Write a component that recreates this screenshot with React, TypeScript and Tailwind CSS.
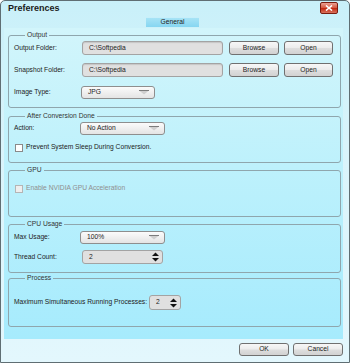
import React from "react";

function Btn({ label, className }: { label: string; className: string }) {
  return (
    <div
      className={`h-[14px] flex items-center justify-center rounded-[3px] border border-[#707070] bg-[linear-gradient(#f7f7f7_0%,#ececec_48%,#dedede_52%,#d2d2d2_100%)] text-[#222] ${className}`}
    >
      {label}
    </div>
  );
}

function TextField({ value, className }: { value: string; className: string }) {
  return (
    <div
      className={`h-[14px] flex items-center pl-[6px] rounded-[3px] border border-[#a3a3a3] bg-[#e0e0e0] shadow-[inset_0_1px_1px_rgba(0,0,0,0.12)] ${className}`}
    >
      {value}
    </div>
  );
}

function Dropdown({ value, className }: { value: string; className: string }) {
  return (
    <div
      className={`h-[13px] flex items-center justify-between pl-[6px] pr-[5px] rounded-[3px] border border-[#8e8e8e] bg-[linear-gradient(#fbfbfb,#e4e4e4)] ${className}`}
    >
      <span>{value}</span>
      <svg width="10" height="5" viewBox="0 0 10 5">
        <path d="M0 0.5 H10 L5 4.5 Z" fill="#cfcfcf" />
        <path d="M0 0.5 H10" stroke="#7c7c7c" strokeWidth="1" />
      </svg>
    </div>
  );
}

function Spin({ value, className }: { value: string; className: string }) {
  return (
    <div
      className={`flex items-center justify-between pl-[6px] pr-[3px] rounded-[3px] border border-[#a3a3a3] bg-[#e0e0e0] ${className}`}
    >
      <span>{value}</span>
      <svg width="7" height="10" viewBox="0 0 7 10">
        <path d="M3.5 0.5 L7 4 H0 Z" fill="#111" />
        <path d="M0 6 H7 L3.5 9.5 Z" fill="#111" />
      </svg>
    </div>
  );
}

function Check({ label, disabled }: { label: string; disabled?: boolean }) {
  return (
    <div className="h-[9px] flex items-center">
      <div
        className={`w-[8px] h-[8px] border ${
          disabled ? "border-[#b5b5b5] bg-[#eeeeee]" : "border-[#8a8a8a] bg-white"
        }`}
      />
      <span className={`ml-[3px] ${disabled ? "text-[#8f8f8f]" : "text-[#222]"}`}>{label}</span>
    </div>
  );
}

function Group({
  title,
  className,
  children,
}: {
  title: string;
  className: string;
  children: React.ReactNode;
}) {
  return (
    <fieldset
      className={`w-[333px] border border-[#8fa6ad] rounded-[3px] pl-[5px] ${className}`}
    >
      <legend className="ml-[11px] px-[2px] leading-[8px] text-[#333]">{title}</legend>
      {children}
    </fieldset>
  );
}

export default function App() {
  return (
    <div className="w-[350px] h-[363px] overflow-hidden flex flex-col border border-[#5f6e73] rounded-t-[5px] bg-[linear-gradient(#c9f0f9,#d9f4fb_40%,#e3f7fd)] font-['Liberation_Sans',Arial,sans-serif] text-[6.7px] text-[#222] whitespace-nowrap">
      <div className="h-[16px] flex items-start justify-between pl-[7px] pr-[11px]">
        <span className="mt-[2px] font-bold text-[9px] leading-[10px] text-[#1a1a1a]">
          Preferences
        </span>
        <div className="mt-[1px] w-[18px] h-[12px] flex items-center justify-center rounded-[2px] border border-[#7a1d10] bg-[linear-gradient(#eba193,#d4573f_48%,#c1260f_52%,#d9735e)]">
          <svg width="8" height="6" viewBox="0 0 8 6">
            <path d="M1 0.5 L7 5.5 M7 0.5 L1 5.5" stroke="#fff" strokeWidth="1.6" />
          </svg>
        </div>
      </div>

      <div className="h-[11px] flex pl-[145px]">
        <div className="w-[53px] h-[10px] flex items-center justify-center bg-[linear-gradient(#a6e3f6,#86d6f1)] border-t border-[#c8effa] text-[#222]">
          General
        </div>
      </div>

      <div className="ml-[3px] w-[339px] h-[311px] pl-[4px] pt-[3px] bg-[linear-gradient(#d2f5fb,#bdf1fc_45%,#a6ebfd)]">
        <Group title="Output" className="h-[77px]">
          <div className="pt-[2px] flex flex-col">
            <div className="h-[14px] flex items-center">
              <span className="w-[68px]">Output Folder:</span>
              <TextField value="C:\Softpedia" className="w-[141px]" />
              <Btn label="Browse" className="ml-[6px] w-[50px]" />
              <Btn label="Open" className="ml-[5px] w-[49px]" />
            </div>
            <div className="mt-[8px] h-[14px] flex items-center">
              <span className="w-[68px]">Snapshot Folder:</span>
              <TextField value="C:\Softpedia" className="w-[141px]" />
              <Btn label="Browse" className="ml-[6px] w-[50px]" />
              <Btn label="Open" className="ml-[5px] w-[49px]" />
            </div>
            <div className="mt-[9px] h-[13px] flex items-center">
              <span className="w-[67px]">Image Type:</span>
              <Dropdown value="JPG" className="w-[74px]" />
            </div>
          </div>
        </Group>

        <Group title="After Conversion Done" className="mt-[4px] h-[51px]">
          <div className="pt-[2px] flex flex-col">
            <div className="h-[13px] flex items-center">
              <span className="w-[66px]">Action:</span>
              <Dropdown value="No Action" className="w-[85px]" />
            </div>
            <div className="mt-[8px] pl-[1px]">
              <Check label="Prevent System Sleep During Conversion." />
            </div>
          </div>
        </Group>

        <Group title="GPU" className="mt-[3px] h-[51px]">
          <div className="pt-[10px] pl-[1px]">
            <Check label="Enable NVIDIA GPU Acceleration" disabled />
          </div>
        </Group>

        <Group title="CPU Usage" className="mt-[3px] h-[53px]">
          <div className="pt-[3px] flex flex-col">
            <div className="h-[13px] flex items-center">
              <span className="w-[66px]">Max Usage:</span>
              <Dropdown value="100%" className="w-[85px]" />
            </div>
            <div className="mt-[6px] h-[14px] flex items-center">
              <span className="w-[68px]">Thread Count:</span>
              <Spin value="2" className="w-[81px] h-[14px]" />
            </div>
          </div>
        </Group>

        <Group title="Process" className="mt-[1px] h-[53px]">
          <div className="pt-[13px] h-[28px] flex items-center">
            <span className="w-[135px]">Maximum Simultaneous Running Processes:</span>
            <Spin value="2" className="w-[32px] h-[15px]" />
          </div>
        </Group>
      </div>

      <div className="flex justify-end gap-[4px] pt-[4px] pr-[6px]">
        <Btn label="OK" className="w-[50px] !h-[13px]" />
        <Btn label="Cancel" className="w-[50px] !h-[13px]" />
      </div>
    </div>
  );
}
